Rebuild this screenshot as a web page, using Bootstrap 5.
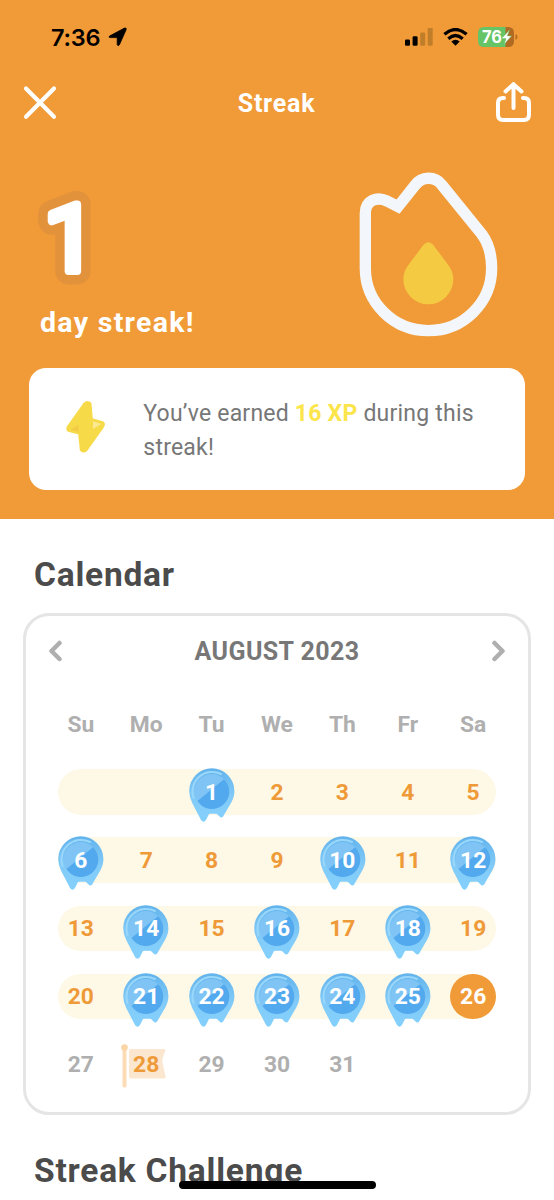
<!DOCTYPE html>
<html lang="en">
<head>
<meta charset="utf-8">
<meta name="viewport" content="width=device-width, initial-scale=1">
<title>Streak</title>
<link rel="stylesheet" href="https://cdn.jsdelivr.net/npm/bootstrap@5.3.0/dist/css/bootstrap.min.css">
<style>
body{font-family:Roboto,"Liberation Sans",sans-serif;height:1200px;overflow:hidden;background:#fff;line-height:1}
svg{display:block;flex:none}
.hero{background:#f09b37;height:519px;color:#fff}
.status{height:74px;padding:0 36px 0 51px;color:#000}
.clock{font:600 23.5px/1 Inter,sans-serif;letter-spacing:-.2px;padding-top:1px}
.wifi{margin:0 10px}
.topbar{height:58px;padding:0 23px 0 22px}
.topbar h1{font-size:25px;font-weight:700;letter-spacing:.75px;padding-top:2px}
.summary{height:236px;padding:38px 54px 0 36px}
.unit{font-size:28.5px;font-weight:700;letter-spacing:1.3px;margin:11px 0 0 4px}
.xp{margin:0 29px;height:122px;border-radius:17px;background:#fff;padding-left:35px;gap:36px;color:#777}
.xp svg{margin-top:-6px}
.xp p{font-size:23px;line-height:34px;letter-spacing:.22px;padding-top:4px}
.xp b{color:#fbe54b;font-weight:700}
.heading{font-size:33.5px;font-weight:700;color:#4b4b4b;margin:0 0 0 34px;line-height:40px;letter-spacing:.78px;padding-top:36px}
.cal{margin:18px 23px 0;height:502px;border:3px solid #e5e5e5;border-radius:26px}
.month{font-size:25px;font-weight:700;color:#777;letter-spacing:.4px}
.calhead{height:70px;padding:0 22px}
.week{height:45.5px;margin:0 32px 22.7px;border-radius:23px}
.weekdays{margin-top:16px;margin-bottom:21.7px}
.week.on{background:#fef8e6}
.week>*{width:45.6px;height:45.5px;display:flex;align-items:center;justify-content:center;position:relative;font-size:22.8px;font-weight:700;color:#ef9a38;padding-top:2px}
.week.off>*{color:#afafaf}
.week .pin,.week .today{color:#fff}
.today{background:#f09b37;border-radius:50%}
.pin svg,.goal svg{position:absolute;left:0;top:-1px}
.week .goal svg{left:-3px;top:0}
.week b{font-weight:700;position:relative}
.week .goal{color:#ef9a38}
.homebar{position:absolute;left:179px;top:1181px;width:197px;height:7.5px;border-radius:4px;background:#000}
</style>
</head>
<body class="position-relative">
<svg width="0" height="0" class="position-absolute">
<defs>
<linearGradient id="rim" x1="0" y1="0" x2="0" y2="1"><stop offset="0" stop-color="#62b3ec"/><stop offset=".55" stop-color="#82cbf8"/><stop offset="1" stop-color="#84d0fc"/></linearGradient>
<symbol id="pin" viewBox="0 0 46 55">
<path fill="url(#rim)" d="M22.8.3A22.6 22.6 0 0 1 45.4 23C45.4 29 43 33.500 40.800 37L34.300 48.200Q32.500 50.500 30.500 48.400L28.500 46.400Q28 45.800 27 45.800H21Q20 45.800 19.600 46.800L17 52Q14.500 55.600 12 52L3.200 35Q.2 29 .2 23A22.600 22.600 0 0 1 22.800.3Z"/>
<circle cx="22.800" cy="23.400" r="17.300" fill="#7fc4f4"/>
<path fill="#52a9ee" d="M35 11.200A17.300 17.300 0 1 1 8.500 33.100Z"/>
<path d="M4.500 30A19.700 19.700 0 0 1 32 6" fill="none" stroke="#98d6fa" stroke-width="2" stroke-linecap="round"/>
</symbol>
</defs>
</svg>
<header class="hero">
<div class="status d-flex align-items-center justify-content-between">
<div class="d-flex align-items-center gap-2"><span class="clock">7:36</span>
<svg width="19" height="20" viewBox="0 0 19 20"><path d="M1.500 9.100 16.500 1.100Q18.800.400 18.100 2.800L11.400 17.800Q10 19.800 9.200 17.500V11.300Q9.200 10.600 8.500 10.600H2.500Q0 10.400 1.500 9.100Z" stroke="#000" stroke-width=".8"/></svg></div>
<div class="d-flex align-items-center">
<svg width="28" height="18" viewBox="0 0 28 18"><rect x="0" y="11.500" width="5" height="6.300" rx="1.300"/><rect x="7.600" y="8.200" width="5" height="9.600" rx="1.300"/><g fill="#c07d2a"><rect x="15.200" y="4.500" width="5" height="13.300" rx="1.300"/><rect x="22.700" y="0" width="5" height="17.800" rx="1.300"/></g></svg>
<svg class="wifi" width="25" height="18" viewBox="0 0 25 18"><g fill="none" stroke="#000" stroke-width="3.200"><path d="M1.400 6.300Q12.500-3.300 23.600 6.300"/><path d="M5.300 10.700Q12.500 4.300 19.700 10.700"/></g><path d="M8.300 13.600Q12.500 10 16.700 13.600L12.500 17.800Z"/></svg>
<svg width="40" height="20" viewBox="0 0 40 20"><path fill="#b06a22" d="M6 0H30Q36 0 36 6V14Q36 20 30 20H6Z"/><path fill="#65c466" d="M27.500 0H6Q0 0 0 6V14Q0 20 6 20H27.500Z"/><path fill="#b06a22" d="M37.500 7Q39.500 8 39.500 10T37.500 13Z"/><text x="4" y="16.200" font-family="Inter" font-weight="700" font-size="17.500" textLength="20" lengthAdjust="spacingAndGlyphs" fill="#fff">76</text><path fill="#fff" stroke="#65c466" stroke-width=".5" d="M31.500 3 23.500 11.600H28L26 17.500 33.500 8.900H29.300Z"/></svg>
</div>
</div>
<div class="topbar d-flex align-items-center justify-content-between">
<svg width="36" height="36" viewBox="0 0 36 36" stroke="#fff" stroke-width="4.200" stroke-linecap="round"><path d="M4 3.600 32 31.800M32 3.600 4 31.800"/></svg>
<h1 class="m-0">Streak</h1>
<svg width="36" height="42" viewBox="0 0 36 42" fill="none" stroke="#fff" stroke-width="4" stroke-linecap="round" stroke-linejoin="round"><path d="M9 16H8Q3 16 3 21V32.500Q3 38 8 38H29Q34 38 34 32.500V21Q34 16 29 16H28M18.500 26V2M10.500 9.500 18.500 2.200 26.500 9.500"/></svg>
</div>
<div class="summary d-flex justify-content-between">
<div class="pt-3">
<svg width="70" height="112" viewBox="0 0 70 112" font-family="Roboto" font-weight="400" font-size="93" stroke-linejoin="round"><use href="#days" stroke="#e3923c" stroke-width="27"/><text id="days" x="8" y="84.500" fill="#fff">1</text><use href="#days" stroke="#fff" stroke-width="8"/></svg>
<div class="unit">day streak!</div>
</div>
<svg width="143.300" height="168.300" viewBox="50 30 430 505"><path d="M75 325V160C75 120 110 109 140 123L173 140 224 76C244 48 284 48 304 74L424 222C443 247 454 285 454 325A189.500 187 0 0 1 75 325Z" fill="none" stroke="#f3f6fb" stroke-width="34"/><path fill="#f5ca43" d="M249 255Q264 238 279 255L320 310C332 325 339 340 339 358A75 75 0 0 1 189 358C189 340 196 325 208 310Z"/></svg>
</div>
<div class="xp d-flex align-items-center">
<svg width="43.300" height="55" viewBox="130 115 130 165"><path fill="#f7da48" stroke="#f7da48" stroke-width="5" stroke-linejoin="round" d="M190 129Q200 119 210 128L214 175 246 184Q254 190 247 200L198 269Q187 278 180 268L175 219 143 211Q137 206 141 198Z"/><path fill="#f2cc46" d="M149 207 174 192V213Z"/><path fill="#fbe992" d="M217 182 242 190 217 205Z"/></svg>
<p class="m-0">You’ve earned <b>16 XP</b> during this<br>streak!</p>
</div>
</header>
<main>
<h2 class="heading">Calendar</h2>
<section class="cal">
<div class="calhead d-flex align-items-center justify-content-between">
<svg width="15" height="22" viewBox="0 0 15 22" fill="none" stroke="#afafaf" stroke-width="4.500" stroke-linecap="round" stroke-linejoin="round"><path d="M11.500 3 3.500 11 11.500 19"/></svg>
<div class="month">AUGUST 2023</div>
<svg width="15" height="22" viewBox="0 0 15 22" fill="none" stroke="#afafaf" stroke-width="4.500" stroke-linecap="round" stroke-linejoin="round"><path d="M3.500 3 11.500 11 3.500 19"/></svg>
</div>
<div class="week weekdays off d-flex justify-content-between"><span>Su</span><span>Mo</span><span>Tu</span><span>We</span><span>Th</span><span>Fr</span><span>Sa</span></div>
<div class="week on d-flex justify-content-between"><span></span><span></span><span class="pin"><svg width="46" height="55"><use href="#pin"/></svg><b>1</b></span><span>2</span><span>3</span><span>4</span><span>5</span></div>
<div class="week on d-flex justify-content-between"><span class="pin"><svg width="46" height="55"><use href="#pin"/></svg><b>6</b></span><span>7</span><span>8</span><span>9</span><span class="pin"><svg width="46" height="55"><use href="#pin"/></svg><b>10</b></span><span>11</span><span class="pin"><svg width="46" height="55"><use href="#pin"/></svg><b>12</b></span></div>
<div class="week on d-flex justify-content-between"><span>13</span><span class="pin"><svg width="46" height="55"><use href="#pin"/></svg><b>14</b></span><span>15</span><span class="pin"><svg width="46" height="55"><use href="#pin"/></svg><b>16</b></span><span>17</span><span class="pin"><svg width="46" height="55"><use href="#pin"/></svg><b>18</b></span><span>19</span></div>
<div class="week on d-flex justify-content-between"><span>20</span><span class="pin"><svg width="46" height="55"><use href="#pin"/></svg><b>21</b></span><span class="pin"><svg width="46" height="55"><use href="#pin"/></svg><b>22</b></span><span class="pin"><svg width="46" height="55"><use href="#pin"/></svg><b>23</b></span><span class="pin"><svg width="46" height="55"><use href="#pin"/></svg><b>24</b></span><span class="pin"><svg width="46" height="55"><use href="#pin"/></svg><b>25</b></span><span class="today">26</span></div>
<div class="week off d-flex justify-content-between"><span>27</span><span class="goal"><svg width="46" height="46" viewBox="0 0 46 46"><path fill="#fbe7cf" d="M10 7H44Q46 7 45.300 9L43 15Q41.500 19 43 23L45.500 34Q46 36.500 44 36.500H11Q9 36.500 9 34V9Q9 7 10 7Z"/><path fill="#fbdcb5" d="M2.500 4H6.500V44Q6.500 45.500 4.500 45.500T2.500 44Z"/><circle cx="4.500" cy="5.500" r="3.300" fill="#fbd5a5"/></svg><b>28</b></span><span>29</span><span>30</span><span>31</span><span></span><span></span></div>
</section>
<h2 class="heading">Streak Challenge</h2>
</main>
<div class="homebar"></div>
<script src="https://cdn.jsdelivr.net/npm/bootstrap@5.3.0/dist/js/bootstrap.bundle.min.js"></script>
</body>
</html>
